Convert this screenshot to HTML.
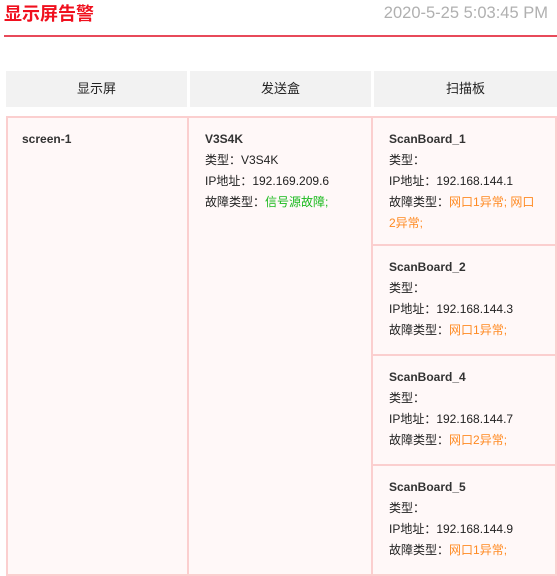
<!DOCTYPE html>
<html><head><meta charset="utf-8"><style>
*{margin:0;padding:0;box-sizing:border-box}
body{width:557px;height:576px;background:#fff;font-family:"Liberation Sans","Noto Sans CJK SC",sans-serif;position:relative;overflow:hidden;color:#222}
.t{position:absolute;left:4px;top:2px;font-size:18px;font-weight:bold;color:#f0101e;line-height:24px}
.d{position:absolute;right:9px;top:3px;font-size:16.5px;color:#b0b0b0;line-height:20px}
.ln{position:absolute;left:4px;top:35px;width:553px;height:2px;background:#e84a5a}
.h{position:absolute;top:71px;height:36px;background:#f2f2f2;font-size:13px;line-height:36px;text-align:center;color:#222}
.c{position:absolute;background:#fff8f8;border:2px solid #fbcfcf;font-size:12px;line-height:21px;padding:11px 0 0 16px}
.c b{font-weight:bold;color:#333}
.g{color:#19b91c}.o{color:#ff8a22}
</style></head><body>
<div class="t">显示屏告警</div>
<div class="d">2020-5-25 5:03:45 PM</div>
<div class="ln"></div>
<div class="h" style="left:6px;width:181px">显示屏</div>
<div class="h" style="left:190px;width:181px">发送盒</div>
<div class="h" style="left:374px;width:183px">扫描板</div>
<div class="c" style="left:6px;top:116px;width:183px;height:460px;padding-left:14px"><b>screen-1</b></div>
<div class="c" style="left:187px;top:116px;width:186px;height:460px"><b>V3S4K</b><br>类型：V3S4K<br>IP地址：192.169.209.6<br>故障类型：<span class="g">信号源故障;</span></div>
<div class="c" style="left:371px;top:116px;width:186px;height:130px;padding-right:20px"><b>ScanBoard_1</b><br>类型：<br>IP地址：192.168.144.1<br>故障类型：<span class="o">网口1异常; 网口2异常;</span></div>
<div class="c" style="left:371px;top:244px;width:186px;height:112px"><b>ScanBoard_2</b><br>类型：<br>IP地址：192.168.144.3<br>故障类型：<span class="o">网口1异常;</span></div>
<div class="c" style="left:371px;top:354px;width:186px;height:112px"><b>ScanBoard_4</b><br>类型：<br>IP地址：192.168.144.7<br>故障类型：<span class="o">网口2异常;</span></div>
<div class="c" style="left:371px;top:464px;width:186px;height:112px"><b>ScanBoard_5</b><br>类型：<br>IP地址：192.168.144.9<br>故障类型：<span class="o">网口1异常;</span></div>
</body></html>
